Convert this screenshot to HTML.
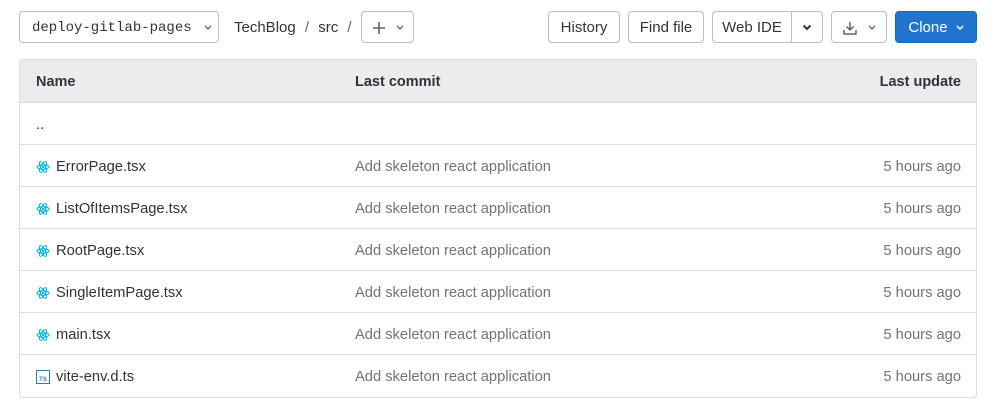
<!DOCTYPE html>
<html><head><style>
*{box-sizing:border-box;margin:0;padding:0}
body{width:994px;height:411px;background:#fff;font-family:"Liberation Sans",sans-serif;font-size:14.7px;color:#333238;position:relative;overflow:hidden}
.btn{position:absolute;top:11px;height:32px;border:1px solid #bfbfc3;border-radius:4px;background:#fff;display:flex;align-items:center;justify-content:center;color:#333238;font-size:15px;padding-top:1px}
.tbl{position:absolute;left:19px;top:59px;width:958px;height:339px;border:1px solid #dcdcde;border-radius:4px;overflow:hidden}
.hd{height:43px;background:#ececef;border-bottom:1px solid #dcdcde;position:relative;font-weight:bold;font-size:14.5px}
.row{height:42px;border-bottom:1px solid #dcdcde;position:relative}
.row:last-child{border-bottom:none}
.c1{position:absolute;left:16px;top:1px;line-height:42px;display:flex;align-items:center;gap:6px}
.c2{position:absolute;left:335px;top:1px;line-height:42px;color:#737278}
.c3{position:absolute;right:15px;top:1px;line-height:42px;color:#737278}
.hd .c1,.hd .c2,.hd .c3{line-height:43px;color:#333238}
svg{display:block}
</style></head><body>
<div class="btn" style="left:19px;width:200px;font-family:'Liberation Mono',monospace;font-size:14px;justify-content:flex-start;padding-left:12px">deploy-gitlab-pages<svg style="margin-left:12px" width="8" height="6" viewBox="0 0 8 6"><path d="M1 1l3 3 3-3" stroke="#626168" stroke-width="1.3" fill="none"/></svg></div>
<div style="position:absolute;left:234px;top:12px;line-height:32px;font-size:15px">TechBlog <span style="color:#626168;margin:0 5px">/</span> src <span style="color:#626168;margin-left:5px">/</span></div>
<div class="btn" style="left:361px;width:53px;gap:10px"><svg width="14" height="14" viewBox="0 0 14 14"><path d="M7 1v12M1 7h12" stroke="#626168" stroke-width="1.6"/></svg><svg width="8" height="6" viewBox="0 0 8 6"><path d="M1 1l3 3 3-3" stroke="#626168" stroke-width="1.3" fill="none"/></svg></div>
<div class="btn" style="left:548px;width:72px">History</div>
<div class="btn" style="left:628px;width:76px">Find file</div>
<div class="btn" style="left:712px;width:111px;justify-content:flex-start;padding-top:0"><span style="width:79px;height:30px;display:flex;align-items:center;justify-content:center;border-right:1px solid #bfbfc3;padding-top:1px">Web IDE</span><svg style="margin-left:10px" width="10" height="7" viewBox="0 0 10 7"><path d="M1.5 1.5l3.5 3.5 3.5-3.5" stroke="#333238" stroke-width="2" fill="none"/></svg></div>
<div class="btn" style="left:831px;width:56px;gap:10px"><svg width="16" height="16" viewBox="0 0 16 16"><path d="M8 2v8M4.5 6.5L8 10l3.5-3.5M2 10v4h12v-4" stroke="#626168" stroke-width="1.5" fill="none"/></svg><svg width="8" height="6" viewBox="0 0 8 6"><path d="M1 1l3 3 3-3" stroke="#626168" stroke-width="1.3" fill="none"/></svg></div>
<div class="btn" style="left:895px;width:82px;background:#1f75cb;border-color:#1068bf;color:#fff;gap:8px;font-size:15px">Clone<svg width="8" height="6" viewBox="0 0 8 6"><path d="M1 1l3 3 3-3" stroke="#fff" stroke-width="1.5" fill="none"/></svg></div>
<div class="tbl">
<div class="hd"><div class="c1">Name</div><div class="c2">Last commit</div><div class="c3">Last update</div></div>
<div class="row"><div class="c1">..</div></div>
<div class="row"><div class="c1"><svg width="14" height="14" viewBox="-7 -7 14 14"><g stroke="#00b4d8" fill="none" stroke-width="1"><ellipse rx="6" ry="2.3"/><ellipse rx="6" ry="2.3" transform="rotate(60)"/><ellipse rx="6" ry="2.3" transform="rotate(120)"/></g><circle r="1.2" fill="#00b4d8"/></svg>ErrorPage.tsx</div><div class="c2">Add skeleton react application</div><div class="c3">5 hours ago</div></div>
<div class="row"><div class="c1"><svg width="14" height="14" viewBox="-7 -7 14 14"><g stroke="#00b4d8" fill="none" stroke-width="1"><ellipse rx="6" ry="2.3"/><ellipse rx="6" ry="2.3" transform="rotate(60)"/><ellipse rx="6" ry="2.3" transform="rotate(120)"/></g><circle r="1.2" fill="#00b4d8"/></svg>ListOfItemsPage.tsx</div><div class="c2">Add skeleton react application</div><div class="c3">5 hours ago</div></div>
<div class="row"><div class="c1"><svg width="14" height="14" viewBox="-7 -7 14 14"><g stroke="#00b4d8" fill="none" stroke-width="1"><ellipse rx="6" ry="2.3"/><ellipse rx="6" ry="2.3" transform="rotate(60)"/><ellipse rx="6" ry="2.3" transform="rotate(120)"/></g><circle r="1.2" fill="#00b4d8"/></svg>RootPage.tsx</div><div class="c2">Add skeleton react application</div><div class="c3">5 hours ago</div></div>
<div class="row"><div class="c1"><svg width="14" height="14" viewBox="-7 -7 14 14"><g stroke="#00b4d8" fill="none" stroke-width="1"><ellipse rx="6" ry="2.3"/><ellipse rx="6" ry="2.3" transform="rotate(60)"/><ellipse rx="6" ry="2.3" transform="rotate(120)"/></g><circle r="1.2" fill="#00b4d8"/></svg>SingleItemPage.tsx</div><div class="c2">Add skeleton react application</div><div class="c3">5 hours ago</div></div>
<div class="row"><div class="c1"><svg width="14" height="14" viewBox="-7 -7 14 14"><g stroke="#00b4d8" fill="none" stroke-width="1"><ellipse rx="6" ry="2.3"/><ellipse rx="6" ry="2.3" transform="rotate(60)"/><ellipse rx="6" ry="2.3" transform="rotate(120)"/></g><circle r="1.2" fill="#00b4d8"/></svg>main.tsx</div><div class="c2">Add skeleton react application</div><div class="c3">5 hours ago</div></div>
<div class="row"><div class="c1"><svg width="14" height="14" viewBox="0 0 14 14"><rect x="0.5" y="0.5" width="13" height="13" fill="#fff" stroke="#3178c6"/><text x="7" y="11" font-size="6" font-family="Liberation Sans" font-weight="bold" fill="#3178c6" text-anchor="middle">TS</text></svg>vite-env.d.ts</div><div class="c2">Add skeleton react application</div><div class="c3">5 hours ago</div></div>
</div>
</body></html>
